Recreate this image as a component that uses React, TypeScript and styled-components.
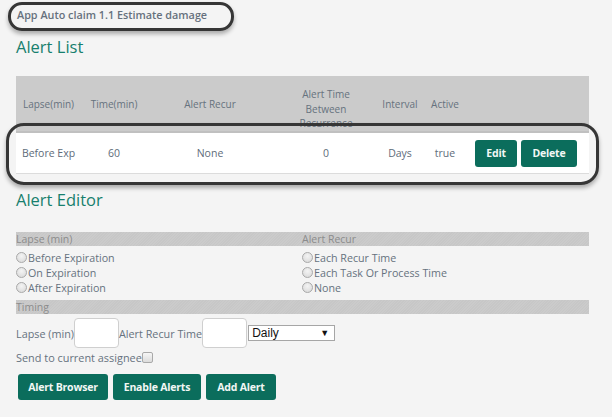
import React from "react";
import styled, { createGlobalStyle } from "styled-components";

const GlobalStyle = createGlobalStyle`
  body {
    margin: 0;
    background: #f4f4f4;
    font-family: "Open Sans", "Liberation Sans", sans-serif;
    color: #5e6c7a;
  }
`;

const Page = styled.div`
  position: relative;
  width: 612px;
  height: 417px;
  padding: 0 23px 0 16px;
  box-sizing: border-box;
  overflow: hidden;
`;

const Title = styled.div`
  height: 28px;
  display: flex;
  align-items: center;
  padding-left: 1px;
  font-size: 10.8px;
  font-weight: 600;
  color: #66717d;
`;

const Heading = styled.h2<{ $top: number }>`
  margin: ${(p) => p.$top}px 0 0;
  height: 22px;
  line-height: 22px;
  font-size: 16.5px;
  font-weight: 400;
  color: #177f6d;
`;

const Annotation = styled.div<{ $l: number; $t: number; $w: number; $h: number; $r: number }>`
  position: absolute;
  left: ${(p) => p.$l}px;
  top: ${(p) => p.$t}px;
  width: ${(p) => p.$w}px;
  height: ${(p) => p.$h}px;
  border: 3px solid #363636;
  border-radius: ${(p) => p.$r}px;
  box-sizing: border-box;
  box-shadow: 0 3px 4px rgba(0, 0, 0, 0.3);
  pointer-events: none;
`;

const cols = "65px 66px 126px 106px 42px 48px 1fr";

const Table = styled.div`
  margin-top: 18px;
  width: 573px;
`;

const HeadRow = styled.div`
  display: grid;
  grid-template-columns: ${cols};
  height: 55px;
  background: #cbcbcb;
  border-bottom: 2px solid #c0c0c0;
  font-size: 10px;
  color: #66727e;
`;

const HeadCell = styled.div`
  display: flex;
  align-items: center;
  justify-content: center;
  text-align: center;
  overflow: hidden;
`;

const Wrapped = styled.div`
  width: 64px;
  line-height: 14.5px;
  height: 47px;
  padding-top: 7px;
  box-sizing: border-box;
  overflow: hidden;
`;

const BodyRow = styled.div`
  display: grid;
  grid-template-columns: ${cols};
  height: 40px;
  background: #ffffff;
  border-bottom: 1px solid #dcdcdc;
  font-size: 10.5px;
  color: #5e6c7a;
`;

const Cell = styled.div`
  display: flex;
  align-items: center;
  justify-content: center;
`;

const ActionCell = styled.div`
  display: flex;
  align-items: center;
  gap: 4px;
  padding-left: 6px;
`;

const Button = styled.button<{ $w: number; $h?: number }>`
  width: ${(p) => p.$w}px;
  height: ${(p) => p.$h ?? 26}px;
  padding: 0;
  border: none;
  border-radius: 3px;
  background: #0b6d5c;
  color: #f2f7f5;
  font-family: "Open Sans", "Liberation Sans", sans-serif;
  font-size: 10.5px;
  font-weight: 700;
  letter-spacing: -0.2px;
`;

const Bar = styled.div<{ $top: number }>`
  margin-top: ${(p) => p.$top}px;
  height: 14px;
  line-height: 14px;
  font-size: 10.5px;
  color: #8c8c8c;
  background: repeating-linear-gradient(
    -45deg,
    #c7c7c7 0px,
    #c7c7c7 1px,
    #cbcbcb 1px,
    #cbcbcb 2px
  );
`;

const TwoBar = styled(Bar)`
  display: grid;
  grid-template-columns: 286px 1fr;
`;

const Options = styled.div`
  display: grid;
  grid-template-columns: 286px 1fr;
  margin-top: 4px;
  font-size: 10.7px;
  color: #66727e;
`;

const OptionList = styled.div`
  display: flex;
  flex-direction: column;
`;

const Option = styled.label`
  display: flex;
  align-items: center;
  height: 15px;
  gap: 1px;
`;

const Radio = styled.span`
  width: 9px;
  height: 9px;
  border-radius: 50%;
  border: 1px solid #a9a9a9;
  background: radial-gradient(circle at 50% 35%, #f4f4f4, #d6d6d6);
  flex-shrink: 0;
`;

const InputRow = styled.div`
  display: flex;
  align-items: center;
  margin-top: 4px;
  height: 30px;
  font-size: 10.8px;
  color: #66727e;
`;

const TextBox = styled.div`
  width: 45px;
  height: 30px;
  box-sizing: border-box;
  background: #ffffff;
  border: 1px solid #cfcfcf;
  border-radius: 4px;
`;

const Select = styled.div`
  margin-left: 1px;
  width: 87px;
  height: 16px;
  box-sizing: border-box;
  display: flex;
  align-items: center;
  justify-content: space-between;
  padding: 0 5px 0 3px;
  background: #ffffff;
  border: 1px solid #a6a6a6;
  font-family: "Liberation Sans", Arial, sans-serif;
  font-size: 12px;
  color: #111;
`;

const Arrow = styled.span`
  font-size: 9px;
`;

const CheckRow = styled.div`
  display: flex;
  align-items: center;
  height: 16px;
  margin-top: 1px;
  font-size: 10.9px;
  color: #66727e;
`;

const Checkbox = styled.span`
  width: 9px;
  height: 9px;
  border: 1px solid #a9a9a9;
  border-radius: 2px;
  background: linear-gradient(#f6f6f6, #dcdcdc);
`;

const Buttons = styled.div`
  display: flex;
  gap: 5px;
  margin: 9px 0 0 2px;
`;

const lapseOptions = ["Before Expiration", "On Expiration", "After Expiration"];
const recurOptions = ["Each Recur Time", "Each Task Or Process Time", "None"];

export default function App() {
  return (
    <>
      <GlobalStyle />
      <Page>
        <Title>App Auto claim 1.1 Estimate damage</Title>
        <Heading $top={8}>Alert List</Heading>

        <Table>
          <HeadRow>
            <HeadCell>Lapse(min)</HeadCell>
            <HeadCell>Time(min)</HeadCell>
            <HeadCell>Alert Recur</HeadCell>
            <HeadCell>
              <Wrapped>Alert Time Between Recurrence</Wrapped>
            </HeadCell>
            <HeadCell>Interval</HeadCell>
            <HeadCell>Active</HeadCell>
            <HeadCell />
          </HeadRow>
          <BodyRow>
            <Cell>Before Exp</Cell>
            <Cell>60</Cell>
            <Cell>None</Cell>
            <Cell>0</Cell>
            <Cell>Days</Cell>
            <Cell>true</Cell>
            <ActionCell>
              <Button $w={42} $h={27}>Edit</Button>
              <Button $w={56} $h={27}>Delete</Button>
            </ActionCell>
          </BodyRow>
        </Table>

        <Heading $top={15}>Alert Editor</Heading>

        <TwoBar $top={21}>
          <span>Lapse (min)</span>
          <span>Alert Recur</span>
        </TwoBar>
        <Options>
          <OptionList>
            {lapseOptions.map((o) => (
              <Option key={o}>
                <Radio />
                {o}
              </Option>
            ))}
          </OptionList>
          <OptionList>
            {recurOptions.map((o) => (
              <Option key={o}>
                <Radio />
                {o}
              </Option>
            ))}
          </OptionList>
        </Options>

        <Bar $top={5}>Timing</Bar>
        <InputRow>
          Lapse (min)
          <TextBox />
          Alert Recur Time
          <TextBox />
          <Select>
            Daily
            <Arrow>▼</Arrow>
          </Select>
        </InputRow>
        <CheckRow>
          Send to current assignee
          <Checkbox />
        </CheckRow>

        <Buttons>
          <Button $w={90}>Alert Browser</Button>
          <Button $w={88}>Enable Alerts</Button>
          <Button $w={70}>Add Alert</Button>
        </Buttons>

        <Annotation $l={8} $t={2} $w={226} $h={29} $r={14} />
        <Annotation $l={6} $t={123} $w={593} $h={62} $r={18} />
      </Page>
    </>
  );
}
